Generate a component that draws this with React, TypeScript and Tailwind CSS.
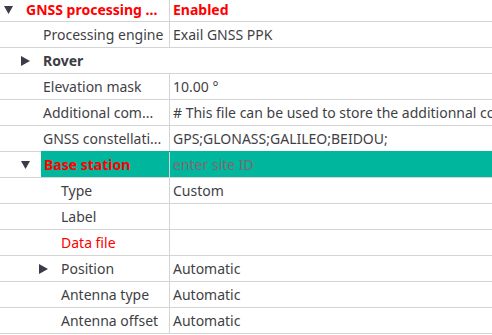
import React from "react";

type Row = {
  label: string;
  value?: string;
  indent: number;
  arrow?: "down" | "right";
  arrowX?: number;
  kind?: "section" | "group" | "missing" | "highlight";
  placeholder?: boolean;
  noDivider?: boolean;
};

const rows: Row[] = [
  { label: "GNSS processing ...", value: "Enabled", indent: 26, arrow: "down", arrowX: 4, kind: "section" },
  { label: "Processing engine", value: "Exail GNSS PPK", indent: 43 },
  { label: "Rover", indent: 43, arrow: "right", arrowX: 21, kind: "group", noDivider: true },
  { label: "Elevation mask", value: "10.00 °", indent: 43 },
  { label: "Additional com...", value: "# This file can be used to store the additionnal commands", indent: 43 },
  { label: "GNSS constellati...", value: "GPS;GLONASS;GALILEO;BEIDOU;", indent: 43 },
  { label: "Base station", value: "enter site ID", indent: 44, arrow: "down", arrowX: 21, kind: "highlight", placeholder: true },
  { label: "Type", value: "Custom", indent: 61 },
  { label: "Label", value: "", indent: 61 },
  { label: "Data file", value: "", indent: 61, kind: "missing" },
  { label: "Position", value: "Automatic", indent: 61, arrow: "right", arrowX: 39 },
  { label: "Antenna type", value: "Automatic", indent: 61 },
  { label: "Antenna offset", value: "Automatic", indent: 61 },
];

const Arrow = ({ dir }: { dir: "down" | "right" }) =>
  dir === "down" ? (
    <svg width="9" height="8" viewBox="0 0 9 8" className="fill-[#3c3c48]">
      <path d="M0 0 H9 L4.5 8 Z" />
    </svg>
  ) : (
    <svg width="9" height="10" viewBox="0 0 9 10" className="fill-[#3c3c48]">
      <path d="M0 0 L9 5 L0 10 Z" />
    </svg>
  );

export default function App() {
  return (
    <div className="w-[492px] h-[335px] overflow-hidden bg-white text-[14px] text-[#3f3f46] font-['Noto_Sans',sans-serif] leading-none">
      {rows.map((r, i) => {
        const labelClass =
          r.kind === "section"
            ? "font-bold text-[#ff0000]"
            : r.kind === "group"
            ? "font-bold text-[#3c3c44]"
            : r.kind === "highlight"
            ? "font-bold text-[#ff0000]"
            : r.kind === "missing"
            ? "text-[#ff0000]"
            : "";
        return (
          <div
            key={i}
            className={`relative flex border-b border-[#d4d4d4] ${i === 0 ? "h-[22px]" : "h-[26px]"}`}
          >
            {r.arrow && (
              <div
                className={`absolute top-0 bottom-0 flex items-center ${i === 0 ? "pb-[2px]" : ""}`}
                style={{ left: r.arrowX }}
              >
                <Arrow dir={r.arrow} />
              </div>
            )}
            {r.kind === "highlight" && (
              <div className="absolute left-[41px] right-0 top-[-1px] bottom-0 bg-[#00b69c]" />
            )}
            <div
              className={`relative w-[169px] shrink-0 flex items-center whitespace-nowrap overflow-hidden ${labelClass} ${i === 0 ? "pb-[2px]" : ""}`}
              style={{ paddingLeft: r.indent }}
            >
              {r.label}
            </div>
            <div
              className={`relative flex-1 flex items-center pl-[3px] whitespace-nowrap overflow-hidden ${
                r.noDivider ? "border-l border-transparent" : "border-l border-[#d4d4d4]"
              } ${i === 0 ? "font-bold text-[#ff0000] pb-[2px]" : ""} ${r.placeholder ? "text-[#7c6a72]" : ""}`}
            >
              {r.value}
            </div>
          </div>
        );
      })}
    </div>
  );
}
